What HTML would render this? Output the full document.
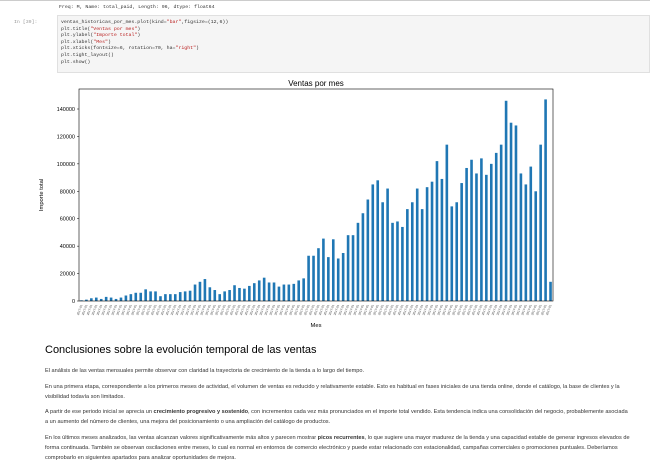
<!DOCTYPE html>
<html><head><meta charset="utf-8"><style>
body{margin:0;width:650px;height:460px;background:#fff;overflow:hidden;font-family:"Liberation Sans",sans-serif;position:relative}
.mono{font-family:"Liberation Mono",monospace;font-size:4.9px;line-height:6.6px;color:#333}
.cell{position:absolute;left:57px;top:15px;width:593px;height:58px;background:#f5f5f5;border:1px solid #e0e0e0;box-sizing:border-box;padding:4px 0 0 3px}
.s{color:#ba2121}
h2{position:absolute;left:45px;top:344px;margin:0;font-size:11px;font-weight:normal;color:#000}
.p{position:absolute;left:45px;font-size:5.6px;line-height:10px;color:#333;width:585px}
</style></head><body>
<div class="mono" style="position:absolute;left:59px;top:-2px;">2020-07&nbsp;&nbsp;&nbsp;&nbsp;&nbsp;&nbsp;&nbsp;&nbsp;&nbsp;&nbsp;&nbsp;&nbsp;&nbsp;14.0100<br>Freq: M, Name: total_paid, Length: 96, dtype: float64</div>
<div style="position:absolute;left:0;top:0;width:650px;height:1px;background:#ccc"></div>
<div class="mono" style="position:absolute;left:14px;top:20px;color:#999">In [39]:</div>
<div class="cell mono">ventas_historicas_por_mes.plot(kind=<span class="s">"bar"</span>,figsize=(12,6))<br>plt.title(<span class="s">"Ventas por mes"</span>)<br>plt.ylabel(<span class="s">"Importe total"</span>)<br>plt.xlabel(<span class="s">"Mes"</span>)<br>plt.xticks(fontsize=6, rotation=70, ha=<span class="s">"right"</span>)<br>plt.tight_layout()<br>plt.show()</div>
<svg id="c" width="650" height="340" style="position:absolute;left:0;top:0" font-family="Liberation Sans, sans-serif"></svg>
<h2>Conclusiones sobre la evolución temporal de las ventas</h2>
<div class="p" style="top:366px">El análisis de las ventas mensuales permite observar con claridad la trayectoria de crecimiento de la tienda a lo largo del tiempo.</div>
<div class="p" style="top:382px">En una primera etapa, correspondiente a los primeros meses de actividad, el volumen de ventas es reducido y relativamente estable. Esto es habitual en fases iniciales de una tienda online, donde el catálogo, la base de clientes y la visibilidad todavía son limitados.</div>
<div class="p" style="top:407px">A partir de ese periodo inicial se aprecia un <b>crecimiento progresivo y sostenido</b>, con incrementos cada vez más pronunciados en el importe total vendido. Esta tendencia indica una consolidación del negocio, probablemente asociada a un aumento del número de clientes, una mejora del posicionamiento o una ampliación del catálogo de productos.</div>
<div class="p" style="top:433px">En los últimos meses analizados, las ventas alcanzan valores significativamente más altos y parecen mostrar <b>picos recurrentes</b>, lo que sugiere una mayor madurez de la tienda y una capacidad estable de generar ingresos elevados de forma continuada. También se observan oscilaciones entre meses, lo cual es normal en entornos de comercio electrónico y puede estar relacionado con estacionalidad, campañas comerciales o promociones puntuales. Deberíamos comprobarlo en siguientes apartados para analizar oportunidades de mejora.</div>
<script>
var v=[0.5,1,2,2.5,1.5,3,2.5,1.5,2.5,4,5,6,6,8.5,7,7,3.5,5,5,5,6.5,7,7.5,12,14,16,10,8,5,7,8,11.5,9.5,9,11,13,15,17,13.5,13.5,10.5,12,12,12.5,15,16.5,33,33,38.5,45.5,32,45,31,35,48,48,57,64,74,85,88,72,82,57,58,54,67,72,82,67,83,87,102,89,114,69,72,86,97,103,93,104,92,100,108,114,146,130,128,93,85,98,80,114,147,14];
var L=79,R=553,T=89,B=301,k=(B-109)/140,n=v.length,sp=(R-L)/n,s='';
s+='<text x="316" y="86" font-size="8" text-anchor="middle" fill="#000">Ventas por mes</text>';
for(var i=0;i<n;i++){var h=v[i]*k,x=L+sp*(i+0.5);s+='<rect x="'+(x-1.3)+'" y="'+(B-h)+'" width="2.6" height="'+h+'" fill="#1f77b4"/>';
s+='<text transform="translate('+(x+1)+',305) rotate(-70)" font-size="3" text-anchor="end" fill="#333">2017-01</text>';}
for(var j=0;j<=7;j++){var y=B-j*20*k;s+='<line x1="'+(L-2)+'" x2="'+L+'" y1="'+y+'" y2="'+y+'" stroke="#000" stroke-width="0.5"/><text x="'+(L-4)+'" y="'+(y+2)+'" font-size="5.5" text-anchor="end" fill="#000">'+(j*20000)+'</text>';}
s+='<rect x="'+L+'" y="'+T+'" width="'+(R-L)+'" height="'+(B-T)+'" fill="none" stroke="#000" stroke-width="0.6"/>';
s+='<text transform="translate(43,195) rotate(-90)" font-size="5.8" text-anchor="middle">Importe total</text>';
s+='<text x="316" y="327" font-size="5.8" text-anchor="middle">Mes</text>';
document.getElementById('c').innerHTML=s;
</script>
</body></html>
